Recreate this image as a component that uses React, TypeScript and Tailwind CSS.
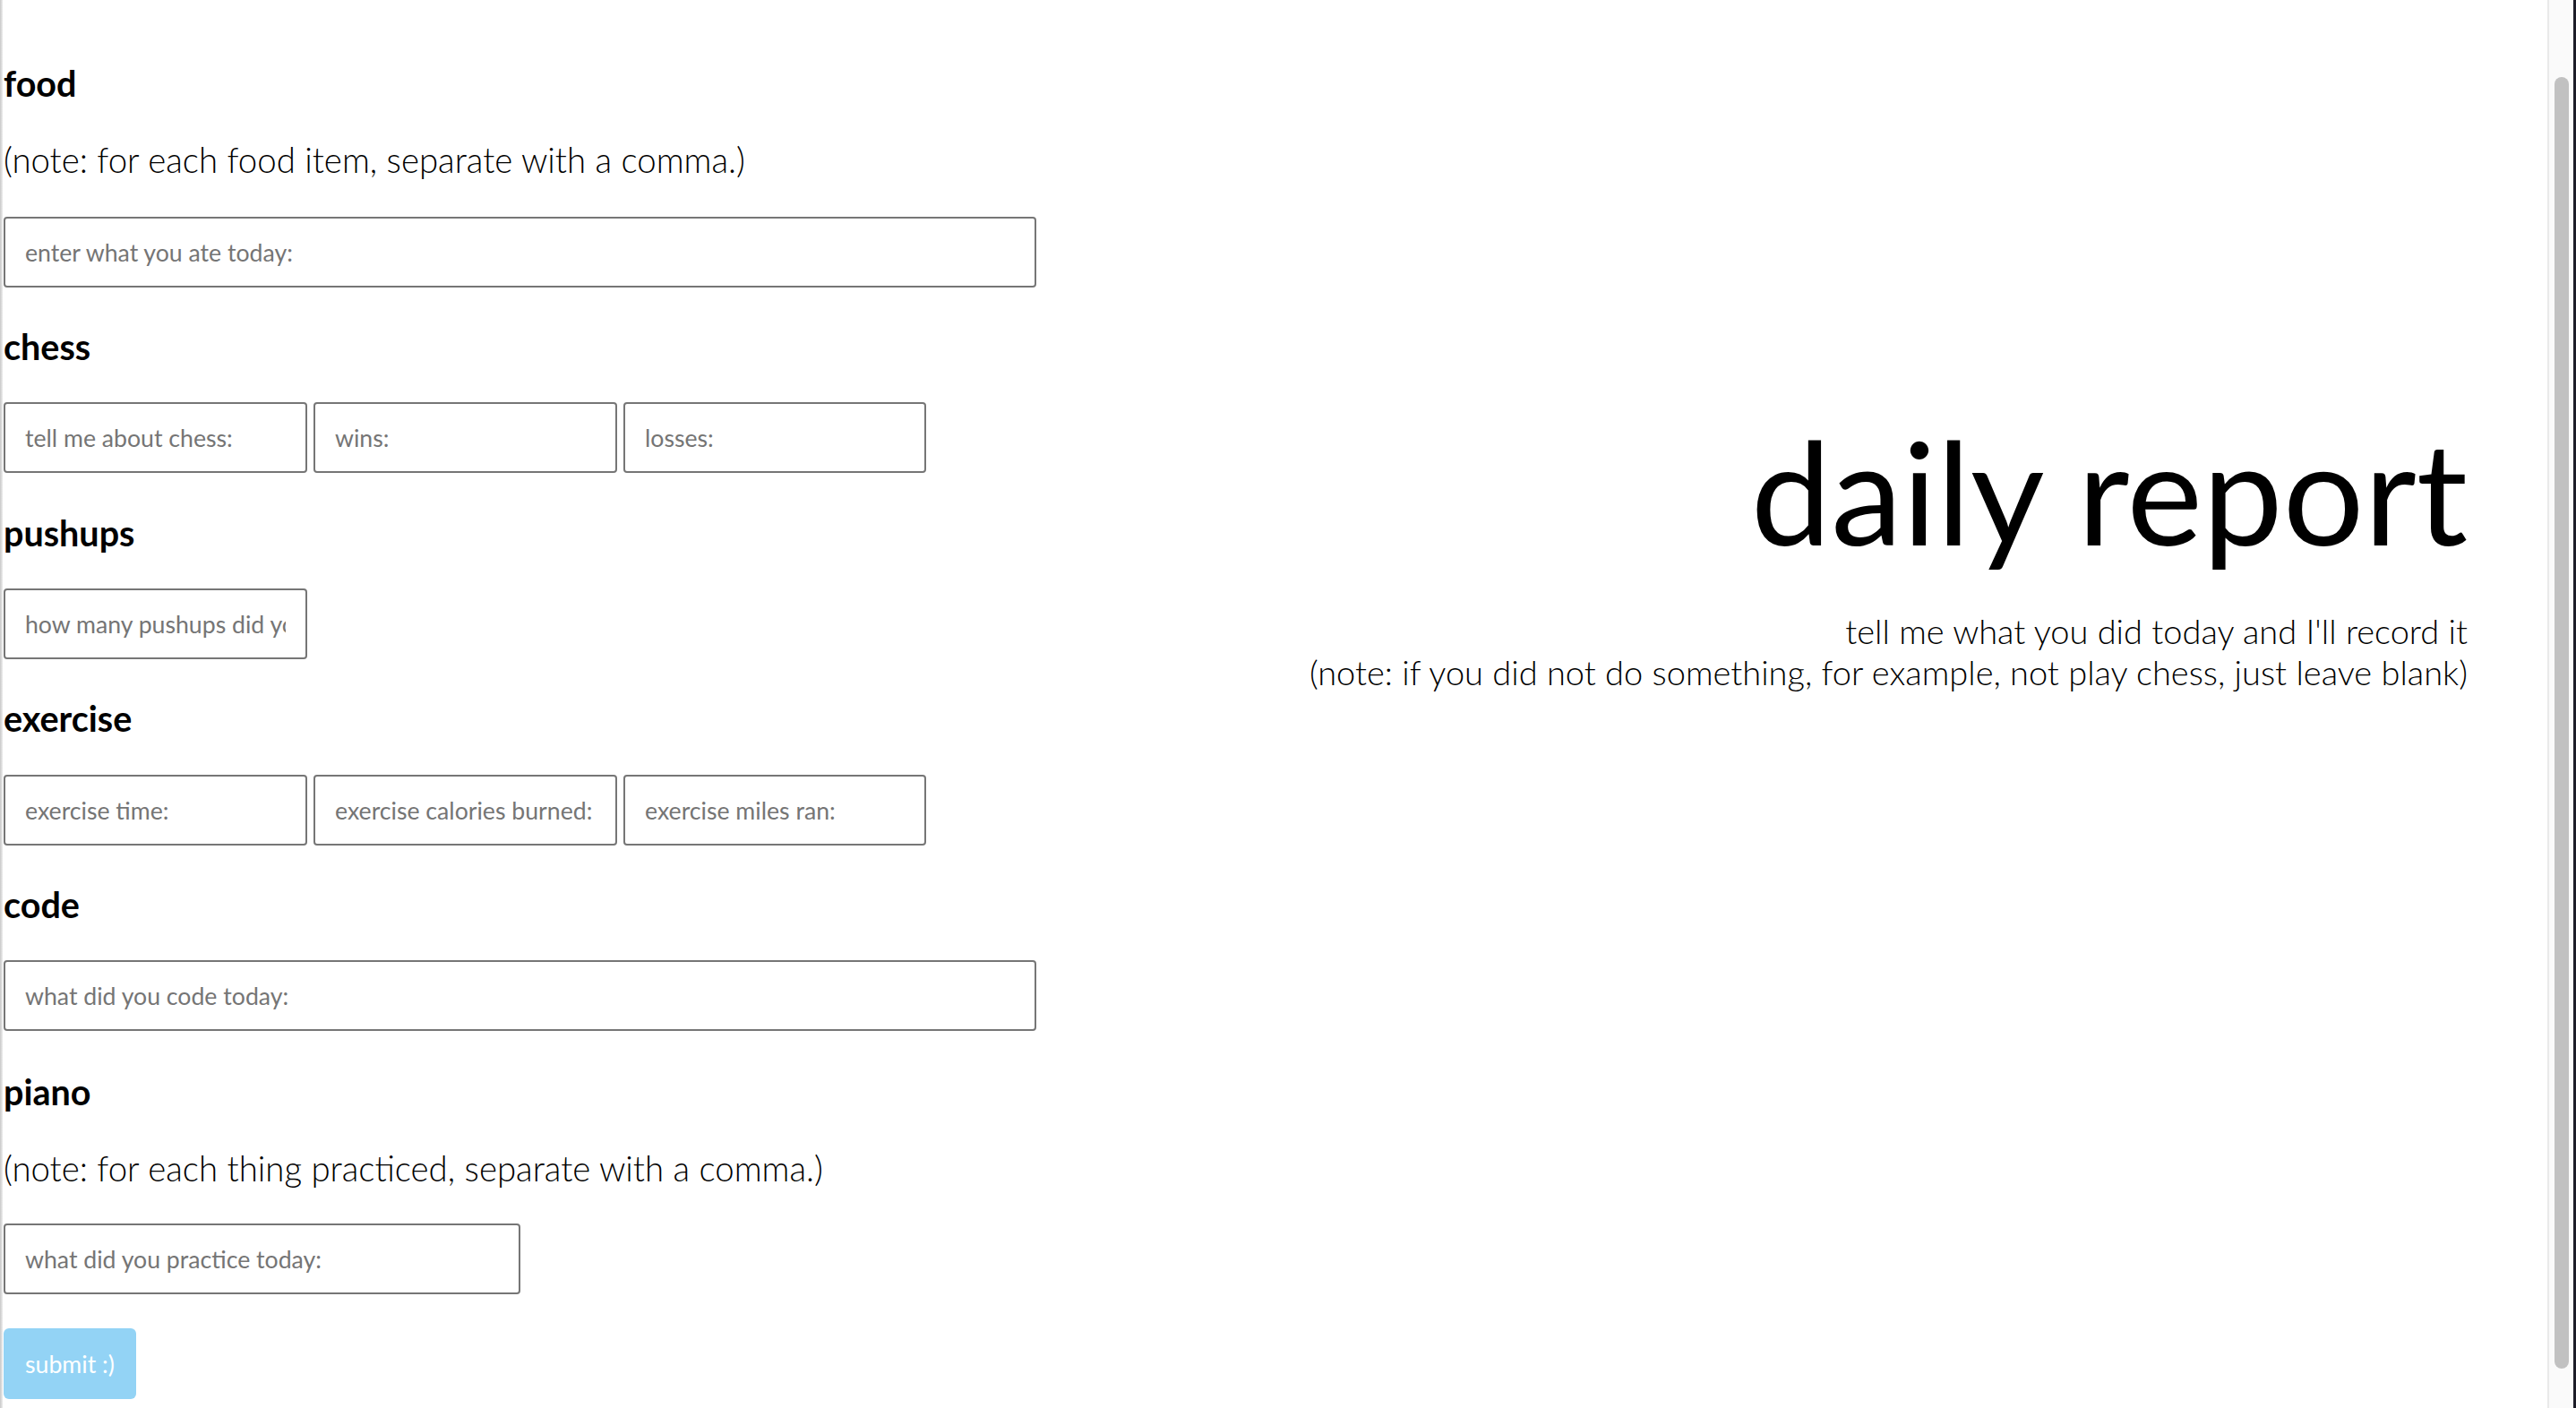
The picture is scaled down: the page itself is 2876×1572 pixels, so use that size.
import React from "react";

const inputCls =
  "h-[79px] border-2 border-[#767676] rounded-[4px] px-[22px] text-[26.67px] text-black placeholder:text-[#757575] bg-white outline-none font-['Lato',sans-serif]";

function Heading({ children, className = "" }: { children: React.ReactNode; className?: string }) {
  return (
    <h3 className={"h-[44px] leading-[44px] text-[39.5px] font-bold text-black " + className}>{children}</h3>
  );
}

function Note({ children, className = "" }: { children: React.ReactNode; className?: string }) {
  return <p className={"h-[48px] leading-[48px] text-[38.4px] font-light text-black " + className}>{children}</p>;
}

export default function App() {
  return (
    <div className="flex h-[1572px] w-full overflow-hidden bg-white font-['Lato',sans-serif]">
      <div className="w-[3px] shrink-0 bg-gradient-to-r from-[#c8c8c8] to-[#eeeeee]" />
      <div className="flex w-[1160px] shrink-0 flex-col pl-[1px]">
        <Heading className="mt-[71px]">food</Heading>
        <Note className="mt-[39px]">(note: for each food item, separate with a comma.)</Note>
        <input className={inputCls + " mt-[40px] w-[1153px]"} placeholder="enter what you ate today:" />

        <Heading className="mt-[44px]">chess</Heading>
        <div className="mt-[40px] flex gap-[7px]">
          <input className={inputCls + " w-[339px]"} placeholder="tell me about chess:" />
          <input className={inputCls + " w-[339px]"} placeholder="wins:" />
          <input className={inputCls + " w-[338px]"} placeholder="losses:" />
        </div>

        <Heading className="mt-[45px]">pushups</Heading>
        <input className={inputCls + " mt-[40px] w-[339px]"} placeholder="how many pushups did you do today:" />

        <Heading className="mt-[44px]">exercise</Heading>
        <div className="mt-[41px] flex gap-[7px]">
          <input className={inputCls + " w-[339px]"} placeholder="exercise time:" />
          <input className={inputCls + " w-[339px]"} placeholder="exercise calories burned:" />
          <input className={inputCls + " w-[338px]"} placeholder="exercise miles ran:" />
        </div>

        <Heading className="mt-[44px]">code</Heading>
        <input className={inputCls + " mt-[40px] w-[1153px]"} placeholder="what did you code today:" />

        <Heading className="mt-[46px]">piano</Heading>
        <Note className="mt-[39px]">(note: for each thing practiced, separate with a comma.)</Note>
        <input className={inputCls + " mt-[38px] w-[577px]"} placeholder="what did you practice today:" />

        <button className="mt-[38px] h-[79px] w-[148px] rounded-[6px] bg-[#93d3f5] px-[24px] text-left text-[26.67px] text-white">
          submit :)
        </button>
      </div>

      <div className="flex min-w-0 flex-1 flex-col items-end pr-[89px] pt-[451px] text-right">
        <h1 className="text-[160px] font-normal leading-[1.2] text-black">daily report</h1>
        <p className="mt-[38px] text-[38px] font-light leading-[46px] text-black">
          tell me what you did today and I'll record it
        </p>
        <p className="text-[38px] font-light leading-[46px] text-black">
          (note: if you did not do something, for example, not play chess, just leave blank)
        </p>
      </div>

      <div className="flex w-[32px] shrink-0">
        <div className="w-[29px] border-l-2 border-[#e9e9e9] bg-[#fafafa] pl-[6px] pt-[86px]">
          <div className="h-[1442px] w-[16px] rounded-full bg-[#c1c1c1]" />
        </div>
        <div className="w-[3px] bg-[#1c1c28]" />
      </div>
    </div>
  );
}
